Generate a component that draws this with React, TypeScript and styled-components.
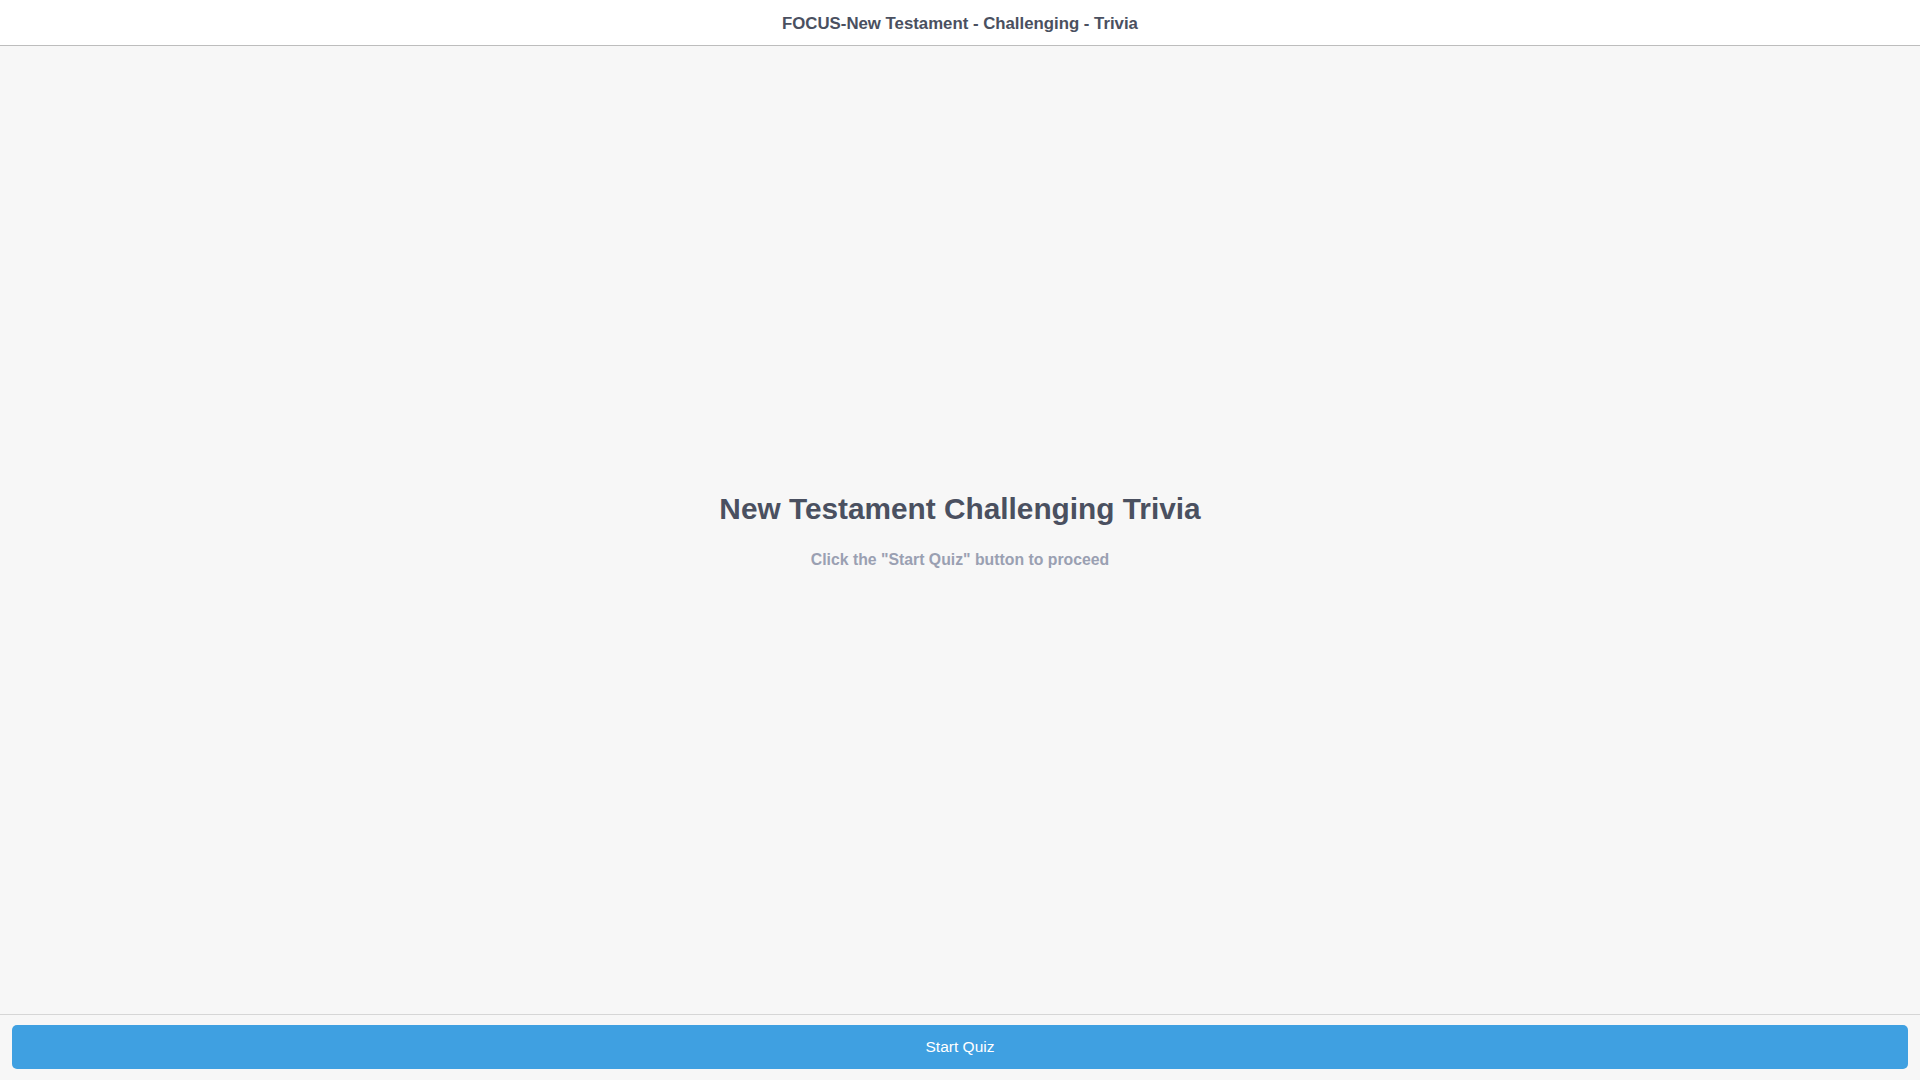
import React from "react";
import styled, { createGlobalStyle } from "styled-components";

const GlobalStyle = createGlobalStyle`
  html, body {
    margin: 0;
    padding: 0;
    height: 100%;
    background: #f7f7f7;
    font-family: "Liberation Sans", Arial, sans-serif;
  }
  #root {
    height: 100%;
  }
`;

const StyledPage = styled.div`
  height: 100vh;
  display: flex;
  flex-direction: column;
  background: #f7f7f7;
`;

const StyledHeader = styled.header`
  height: 43px;
  box-sizing: content-box;
  border-bottom: 1px solid #bdbdbd;
  background: #ffffff;
  display: flex;
  align-items: center;
  justify-content: center;
  padding-top: 2px;
`;

const StyledHeaderTitle = styled.h1`
  margin: 0;
  font-size: 16.8px;
  font-weight: 700;
  color: #4a5060;
`;

const StyledMain = styled.main`
  flex: 1;
  display: flex;
  flex-direction: column;
  align-items: center;
  justify-content: center;
`;

const StyledTitle = styled.h2`
  margin: 0;
  font-size: 29.8px;
  line-height: 36px;
  font-weight: 700;
  color: #4a5060;
`;

const StyledSubtitle = styled.p`
  margin: 23px 0 0;
  font-size: 15.8px;
  line-height: 20px;
  font-weight: 700;
  color: #9aa0b2;
`;

const StyledFooter = styled.footer`
  border-top: 1px solid #d6d6d6;
  padding: 10px 12px 11px;
  display: flex;
`;

const StyledStartButton = styled.button`
  flex: 1;
  height: 44px;
  border: none;
  border-radius: 5px;
  background: #3fa0e1;
  color: #ffffff;
  font-family: "Liberation Sans", Arial, sans-serif;
  font-size: 15.5px;
  cursor: pointer;
  outline: none;
`;

const App: React.FC = () => {
  return (
    <StyledPage>
      <GlobalStyle />
      <StyledHeader>
        <StyledHeaderTitle>FOCUS-New Testament - Challenging - Trivia</StyledHeaderTitle>
      </StyledHeader>
      <StyledMain>
        <StyledTitle>New Testament Challenging Trivia</StyledTitle>
        <StyledSubtitle>Click the "Start Quiz" button to proceed</StyledSubtitle>
      </StyledMain>
      <StyledFooter>
        <StyledStartButton type="button">Start Quiz</StyledStartButton>
      </StyledFooter>
    </StyledPage>
  );
};

export default App;
